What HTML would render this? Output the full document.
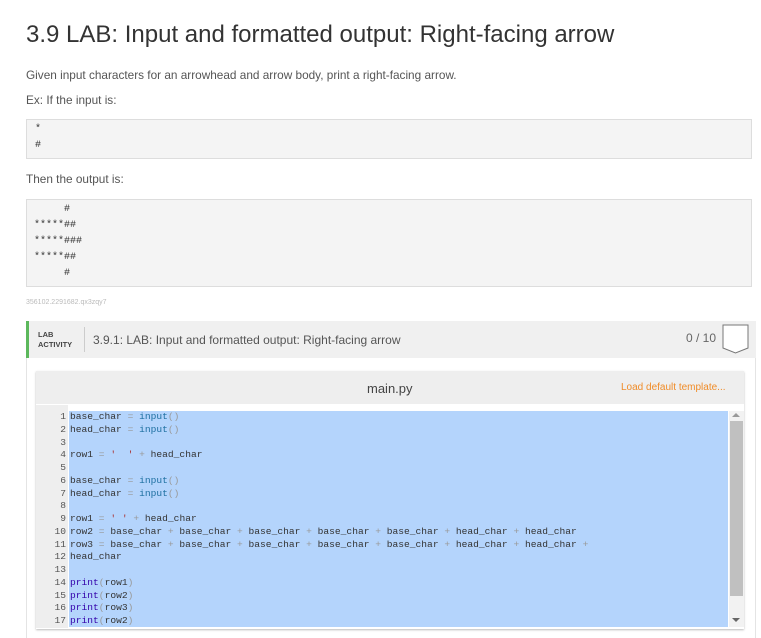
<!DOCTYPE html>
<html><head><meta charset="utf-8"><style>
*{margin:0;padding:0;box-sizing:border-box}
body{width:761px;height:638px;overflow:hidden;background:#fff;font-family:"Liberation Sans",sans-serif;position:relative}
.a{position:absolute}
.mono{font-family:"Liberation Mono",monospace}
.p{color:#555;font-size:11.8px}
.box{background:#f4f4f4;border:1px solid #ddd;}
.code{font-family:"Liberation Mono",monospace;font-size:9.6px;line-height:12.75px;color:#333;white-space:pre}
.fn{color:#1d6fa0}.pn{color:#999}.st{color:#a33}.kw{color:#30a}
</style></head><body>
<div class="a" style="left:26px;top:21px;font-size:24px;color:#333">3.9 LAB: Input and formatted output: Right-facing arrow</div>
<div class="a p" style="left:26px;top:68px">Given input characters for an arrowhead and arrow body, print a right-facing arrow.</div>
<div class="a p" style="left:26px;top:93px">Ex: If the input is:</div>
<div class="a box" style="left:26px;top:119px;width:726px;height:40px"></div>
<div class="a mono" style="left:35px;top:122px;font-size:10px;line-height:16px;color:#333;white-space:pre">*
#</div>
<div class="a p" style="left:26px;top:172px">Then the output is:</div>
<div class="a box" style="left:26px;top:199px;width:726px;height:88px"></div>
<div class="a mono" style="left:34px;top:202px;font-size:10px;line-height:16px;color:#333;white-space:pre">     #
*****##
*****###
*****##
     #</div>
<div class="a" style="left:26px;top:299px;font-size:7px;color:#bbb">356102.2291682.qx3zqy7</div>
<div class="a" style="left:26px;top:321px;width:730px;height:317px;border:1px solid #e4e4e4;border-bottom:none"></div>
<div class="a" style="left:26px;top:321px;width:730px;height:37px;background:#f0f0f0;border-left:3px solid #5cb85c"></div>
<div class="a" style="left:38px;top:330px;font-size:7.5px;font-weight:bold;color:#444;line-height:10px">LAB<br>ACTIVITY</div>
<div class="a" style="left:84px;top:327px;width:1px;height:25px;background:#ccc"></div>
<div class="a" style="left:93px;top:333px;font-size:12px;color:#555">3.9.1: LAB: Input and formatted output: Right-facing arrow</div>
<div class="a" style="left:686px;top:331px;font-size:12px;color:#666">0 / 10</div>
<svg class="a" style="left:722px;top:324px" width="27" height="30"><path d="M1 1H26V24L13.5 29L1 24Z" fill="#fff" stroke="#777" stroke-width="1"/></svg>
<div class="a" style="left:36px;top:371px;width:708px;height:258px;background:#fff;box-shadow:0 1px 2px #bbb"></div>
<div class="a" style="left:36px;top:371px;width:708px;height:33px;background:#eee"></div>
<div class="a" style="left:367px;top:381px;font-size:13px;color:#444">main.py</div>
<div class="a" style="left:621px;top:382px;font-size:10px;color:#f08c28">Load default template...</div>
<div class="a" style="left:36px;top:405px;width:32px;height:223px;background:#eee"></div>
<div class="a" style="left:69px;top:411px;width:659px;height:216px;background:#b4d4fc"></div>
<div class="a" style="left:729px;top:411px;width:15px;height:216px;background:#f2f2f2"></div>
<div class="a" style="left:730px;top:421px;width:13px;height:175px;background:#c0c0c0"></div>
<div class="a" style="left:732px;top:413px;width:0;height:0;border-left:4px solid transparent;border-right:4px solid transparent;border-bottom:4px solid #999"></div>
<div class="a" style="left:732px;top:618px;width:0;height:0;border-left:4px solid transparent;border-right:4px solid transparent;border-top:4px solid #666"></div>
<div class="a code" style="left:38px;top:411px;width:28px;text-align:right;color:#555">1
2
3
4
5
6
7
8
9
10
11
12
13
14
15
16
17</div>
<div class="a code" style="left:70px;top:411px">base_char <span class="pn">=</span> <span class="fn">input</span><span class="pn">()</span>
head_char <span class="pn">=</span> <span class="fn">input</span><span class="pn">()</span>

row1 <span class="pn">=</span> <span class="st">'  '</span> <span class="pn">+</span> head_char

base_char <span class="pn">=</span> <span class="fn">input</span><span class="pn">()</span>
head_char <span class="pn">=</span> <span class="fn">input</span><span class="pn">()</span>

row1 <span class="pn">=</span> <span class="st">' '</span> <span class="pn">+</span> head_char
row2 <span class="pn">=</span> base_char <span class="pn">+</span> base_char <span class="pn">+</span> base_char <span class="pn">+</span> base_char <span class="pn">+</span> base_char <span class="pn">+</span> head_char <span class="pn">+</span> head_char
row3 <span class="pn">=</span> base_char <span class="pn">+</span> base_char <span class="pn">+</span> base_char <span class="pn">+</span> base_char <span class="pn">+</span> base_char <span class="pn">+</span> head_char <span class="pn">+</span> head_char <span class="pn">+</span>
head_char

<span class="kw">print</span><span class="pn">(</span>row1<span class="pn">)</span>
<span class="kw">print</span><span class="pn">(</span>row2<span class="pn">)</span>
<span class="kw">print</span><span class="pn">(</span>row3<span class="pn">)</span>
<span class="kw">print</span><span class="pn">(</span>row2<span class="pn">)</span></div>
</body></html>
